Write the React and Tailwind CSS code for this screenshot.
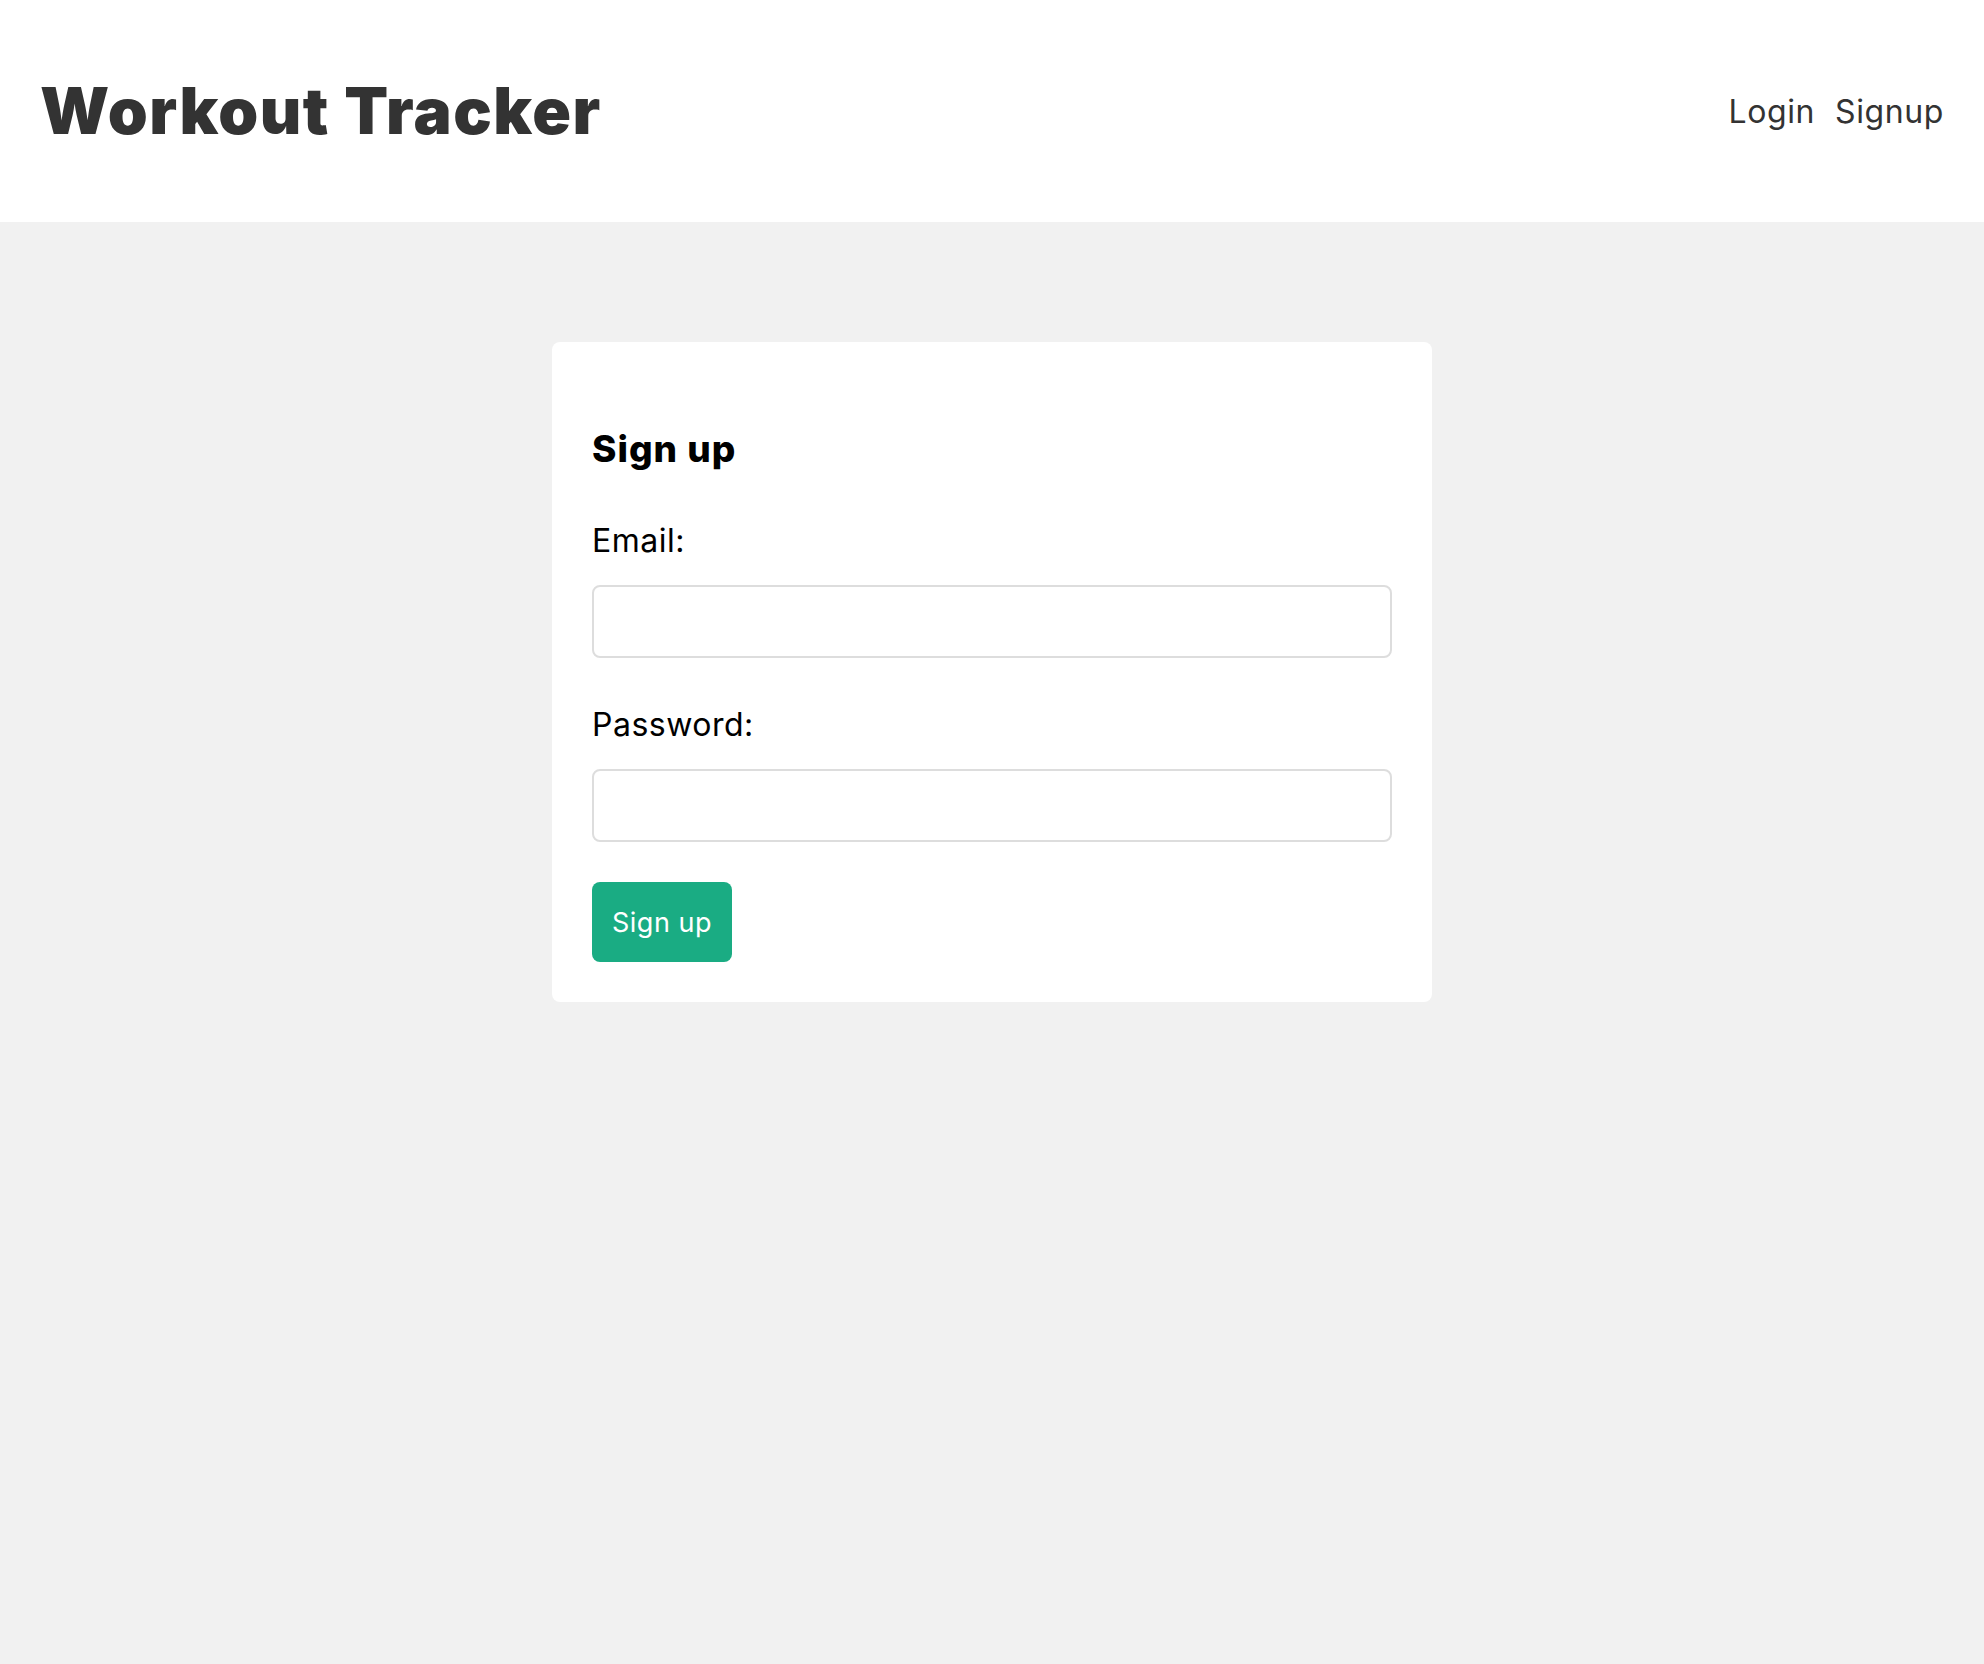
export default function App() {
  return (
    <div className="min-h-screen bg-[#f1f1f1] font-['Inter',sans-serif]">
      <header className="bg-white">
        <div className="flex items-center justify-between px-[40px] py-[20px]">
          <h1 className="my-[43px] text-[64px] font-black leading-[96px] tracking-[1.5px] text-[#333]">Workout Tracker</h1>
          <nav className="flex items-center gap-[20px] pt-[2px] text-[32px] leading-[48px] tracking-[0.6px] text-[#333]">
            <a href="#">Login</a>
            <a href="#">Signup</a>
          </nav>
        </div>
      </header>

      <div className="p-[40px]">
        <form className="mx-auto my-[80px] w-[880px] rounded-[8px] bg-white p-[40px]">
          <h3 className="mb-[37px] mt-[39px] text-[37px] font-extrabold leading-[56px] tracking-[1px] text-black">Sign up</h3>

          <label className="block pt-[3px] text-[32px] leading-[48px] tracking-[0.5px] text-black">Email:</label>
          <input
            type="email"
            className="mb-[40px] mt-[20px] block h-[73px] w-full rounded-[8px] border-2 border-[#ddd] bg-white px-[20px]"
          />

          <label className="block pt-[3px] text-[32px] leading-[48px] tracking-[0.5px] text-black">Password:</label>
          <input
            type="password"
            className="mb-[40px] mt-[20px] block h-[73px] w-full rounded-[8px] border-2 border-[#ddd] bg-white px-[20px]"
          />

          <button
            type="button"
            className="h-[80px] rounded-[8px] bg-[#1aac83] px-[20px] pt-[2px] text-[27px] leading-[40px] tracking-[0.5px] text-white"
          >
            Sign up
          </button>
        </form>
      </div>
    </div>
  )
}
